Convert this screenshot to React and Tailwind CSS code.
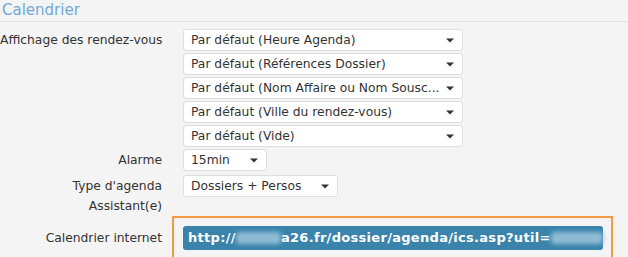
import React from 'react';

const Caret = () => (
  <svg width="8" height="5" viewBox="0 0 8 5" className="shrink-0">
    <path d="M0 0.5 L8 0.5 L4 4.5 Z" fill="#333" />
  </svg>
);

const Select = ({ value, width }) => (
  <div
    className="flex h-[22px] items-center justify-between rounded-[3px] border border-[#dedede] bg-white pl-[7px] pr-[8px] text-[#333]"
    style={{ width }}
  >
    <span className="truncate whitespace-nowrap">{value}</span>
    <Caret />
  </div>
);

const Blur = ({ width }) => (
  <span
    className="inline-block h-[12px] rounded-sm bg-[#8fbbd4] align-middle blur-[2px]"
    style={{ width }}
  />
);

export default function App() {
  const displayOptions = [
    'Par défaut (Heure Agenda)',
    'Par défaut (Références Dossier)',
    'Par défaut (Nom Affaire ou Nom Sousc...',
    'Par défaut (Ville du rendez-vous)',
    'Par défaut (Vide)',
  ];

  return (
    <div className="h-[257px] w-[628px] overflow-hidden bg-[#f4f4f4] text-[12.3px] font-['DejaVu_Sans',sans-serif] text-[#333]">
      {/* Title */}
      <div className="h-[22px] border-b border-[#e2e2e2] pl-[2px]">
        <h2 className="text-[15px] leading-[20px] text-[#72a9d8]">Calendrier</h2>
      </div>

      <div className="grid grid-cols-[162px_1fr] gap-x-[21px] pt-[7px]">
        {/* Affichage */}
        <div className="whitespace-nowrap text-right leading-[22px]">Affichage des rendez-vous</div>
        <div className="flex flex-col gap-[2px]">
          {displayOptions.map((opt) => (
            <Select key={opt} value={opt} width={280} />
          ))}
        </div>

        {/* Alarme */}
        <div className="mt-[2px] text-right leading-[22px]">Alarme</div>
        <div className="mt-[2px]">
          <Select value="15min" width={84} />
        </div>

        {/* Type d'agenda */}
        <div className="mt-[4px] text-right leading-[20px]">
          <div className="pt-[1px]">Type d'agenda</div>
          <div>Assistant(e)</div>
        </div>
        <div className="mt-[4px]">
          <Select value="Dossiers + Persos" width={155} />
        </div>

        {/* Calendrier internet */}
        <div className="pt-[10px] text-right leading-[24px]">Calendrier internet</div>
        <div className="-ml-[11px]">
          <div className="w-[441px] border-2 border-[#f49a45] py-[8px] pl-[9px] pr-[8px]">
            <div className="flex h-[24px] items-center rounded-[3px] bg-[#3a84ac] pl-[5px] text-[13px] font-bold tracking-[0.3px] text-white whitespace-nowrap">
              <span>http://</span>
              <Blur width={50} />
              <span>a26.fr/dossier/agenda/ics.asp?util=</span>
              <Blur width={58} />
            </div>
          </div>
        </div>
      </div>
    </div>
  );
}
